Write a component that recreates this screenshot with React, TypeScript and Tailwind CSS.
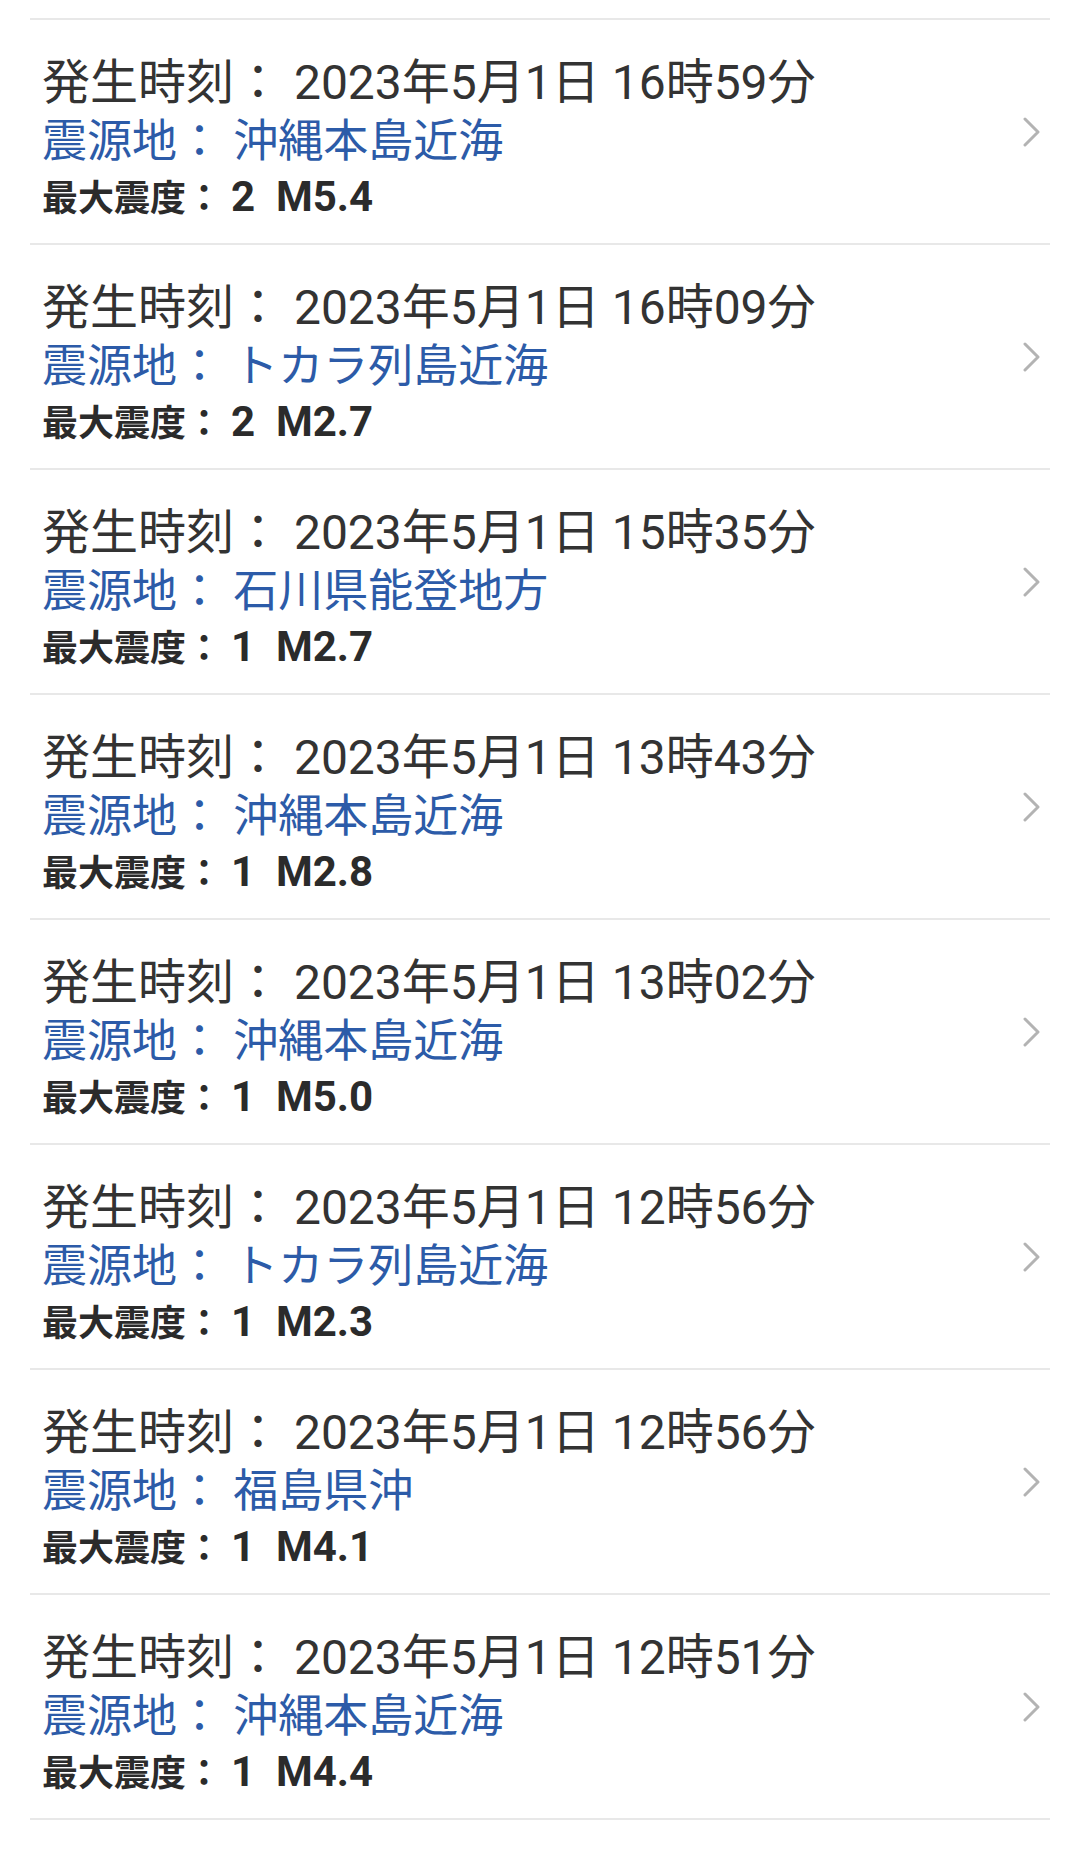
import React from "react";

type Quake = {
  time: string;
  place: string;
  intensity: string;
  magnitude: string;
};

const QUAKES: Quake[] = [
  { time: "16時59分", place: "沖縄本島近海", intensity: "2", magnitude: "M5.4" },
  { time: "16時09分", place: "トカラ列島近海", intensity: "2", magnitude: "M2.7" },
  { time: "15時35分", place: "石川県能登地方", intensity: "1", magnitude: "M2.7" },
  { time: "13時43分", place: "沖縄本島近海", intensity: "1", magnitude: "M2.8" },
  { time: "13時02分", place: "沖縄本島近海", intensity: "1", magnitude: "M5.0" },
  { time: "12時56分", place: "トカラ列島近海", intensity: "1", magnitude: "M2.3" },
  { time: "12時56分", place: "福島県沖", intensity: "1", magnitude: "M4.1" },
  { time: "12時51分", place: "沖縄本島近海", intensity: "1", magnitude: "M4.4" },
];

const FONT = "font-['Roboto','Noto_Sans_CJK_JP',sans-serif]";

const Chevron = () => (
  <svg width="18" height="30" viewBox="0 0 18 30" fill="none" aria-hidden>
    <polyline
      points="2,2 15,15 2,28"
      stroke="#b3b3b3"
      strokeWidth="3"
      strokeLinecap="round"
      strokeLinejoin="round"
    />
  </svg>
);

const QuakeRow = ({ quake }: { quake: Quake }) => (
  <li className="flex h-[225px] items-center border-t-2 border-[#e8e8e8] pl-[12px] pr-[9px]">
    <div className="flex-1 min-w-0 pt-[10px]">
      <p className="h-[60px] pt-[1px] text-[48px] leading-[59px] text-[#333333] whitespace-pre">
        発生時刻： 2023年5月1日 {quake.time}
      </p>
      <p className="h-[59px] text-[45px] leading-[59px] text-[#2c5ba8] whitespace-pre">
        震源地： {quake.place}
      </p>
      <p className="h-[51px] leading-[51px] font-bold text-[#2b2b2b] whitespace-pre">
        <span className="text-[36px]">最大震度： </span>
        <span className="text-[42px]">
          {quake.intensity}  {quake.magnitude}
        </span>
      </p>
    </div>
    <Chevron />
  </li>
);

export default function App() {
  return (
    <div className={`${FONT} min-h-[1849px] bg-white pt-[18px]`}>
      <ul className="mx-[30px] border-b-2 border-[#e8e8e8]">
        {QUAKES.map((q, i) => (
          <QuakeRow key={i} quake={q} />
        ))}
      </ul>
    </div>
  );
}
